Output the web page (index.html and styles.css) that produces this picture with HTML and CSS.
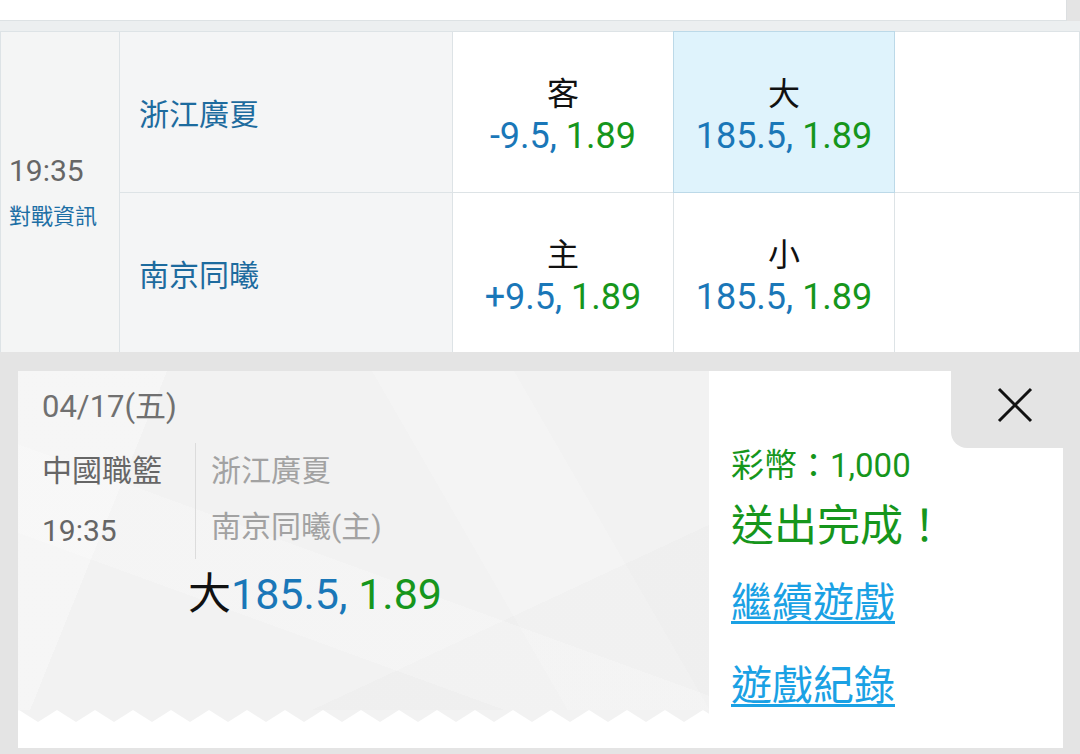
FILE: index.html
```html
<!DOCTYPE html>
<html lang="zh-Hant">
<head>
    <meta charset="UTF-8">
    <meta name="viewport" content="width=device-width, initial-scale=1.0">
    <title>投注完成</title>
    <link rel="stylesheet" href="styles.css">
</head>
<body>
    <div class="topbar"></div>
    <div class="band"></div>

    <div class="odds-table">
        <div class="cell time-cell">
            <div class="time">19:35</div>
            <a class="info" href="#">對戰資訊</a>
        </div>

        <div class="cell team">浙江廣夏</div>
        <div class="cell bet">
            <div class="label">客</div>
            <div class="odds"><span class="line">-9.5,</span> <span class="price">1.89</span></div>
        </div>
        <div class="cell bet selected">
            <div class="label">大</div>
            <div class="odds"><span class="line">185.5,</span> <span class="price">1.89</span></div>
        </div>
        <div class="cell empty"></div>

        <div class="cell team">南京同曦</div>
        <div class="cell bet">
            <div class="label">主</div>
            <div class="odds"><span class="line">+9.5,</span> <span class="price">1.89</span></div>
        </div>
        <div class="cell bet">
            <div class="label">小</div>
            <div class="odds"><span class="line">185.5,</span> <span class="price">1.89</span></div>
        </div>
        <div class="cell empty"></div>
    </div>

    <div class="result-area">
        <div class="ticket">
            <div class="ticket-info">
                <div class="info-body">
                    <div class="date">04/17(五)</div>
                    <div class="match">
                        <div class="league">
                            <div>中國職籃</div>
                            <div class="kickoff">19:35</div>
                        </div>
                        <div class="teams">
                            <div>浙江廣夏</div>
                            <div>南京同曦(主)</div>
                        </div>
                    </div>
                    <div class="pick">大<span class="line">185.5,</span> <span class="price">1.89</span></div>
                </div>
                <!-- torn ticket edge -->
                <svg class="zigzag" width="691" height="12">
                    <defs>
                        <pattern id="zz" x="1" y="0" width="38" height="12" patternUnits="userSpaceOnUse">
                            <polygon points="0,0 38,0 19,12" fill="#f2f2f2"/>
                        </pattern>
                    </defs>
                    <rect width="691" height="12" fill="url(#zz)"/>
                </svg>
                <div class="tear"></div>
            </div>

            <div class="ticket-status">
                <button class="close" aria-label="關閉">
                    <svg width="36" height="36" viewBox="0 0 36 36">
                        <path d="M2 2 L34 34 M34 2 L2 34" stroke="#111" stroke-width="3" fill="none"/>
                    </svg>
                </button>
                <div class="coins">彩幣：1,000</div>
                <div class="done">送出完成！</div>
                <a class="link" href="#">繼續遊戲</a>
                <a class="link" href="#">遊戲紀錄</a>
            </div>
        </div>
    </div>
</body>
</html>
```

FILE: styles.css
```css
body {
    margin: 0;
    font-family: Roboto, "Noto Sans CJK TC", sans-serif;
    background-color: #e4e4e4;
    width: 1080px;
    height: 754px;
    overflow: hidden;
}

.topbar {
    height: 20px;
    width: 1066px;
    background-color: #fff;
    border-right: 1px solid #dcdfe1;
    border-bottom: 1px solid #dde2e4;
}

.band {
    height: 10px;
    background-color: #eceff0;
}

.odds-table {
    display: grid;
    grid-template-columns: 118px 332px 220px 220px 1fr;
    grid-template-rows: 160px 159px;
    gap: 1px;
    background-color: #dde3e6;
    border: 1px solid #dde3e6;
    border-bottom: none;
}

.cell {
    background-color: #fff;
}

.time-cell {
    grid-row: span 2;
    background-color: #f4f5f5;
    display: flex;
    flex-direction: column;
    justify-content: center;
    padding-left: 8px;
}

.time {
    font-size: 30px;
    line-height: 40px;
    color: #666;
}

.info {
    font-size: 22px;
    line-height: 32px;
    margin-top: 10px;
    color: #1d6fa5;
    text-decoration: none;
}

.team {
    background-color: #f4f5f6;
    display: flex;
    align-items: center;
    padding-left: 19px;
    font-size: 30px;
    color: #1d6b9e;
}

.bet {
    display: flex;
    flex-direction: column;
    justify-content: center;
    align-items: center;
    padding-top: 8px;
    box-sizing: border-box;
}

.bet .label {
    font-size: 32px;
    line-height: 40px;
    color: #111;
}

.bet .odds {
    font-size: 36px;
    line-height: 44px;
}

.line {
    color: #1a77b8;
}

.price {
    color: #16961c;
}

.selected {
    background-color: #dff3fc;
    box-shadow: 0 0 0 1px #bcd9e8;
}

.result-area {
    padding: 19px 17px 6px 18px;
}

.ticket {
    display: flex;
    height: 377px;
    background-color: #fff;
}

.ticket-info {
    width: 691px;
    display: flex;
    flex-direction: column;
}

.info-body {
    flex: 1;
    padding: 16px 0 0 24px;
    background-color: #f2f2f2;
    background-image:
        linear-gradient(112deg, rgba(255,255,255,0.3) 0 18%, transparent 18%),
        linear-gradient(200deg, transparent 0 55%, rgba(255,255,255,0.2) 55% 70%, transparent 70%),
        linear-gradient(335deg, rgba(0,0,0,0.012) 0 28%, transparent 28%),
        linear-gradient(60deg, transparent 0 62%, rgba(255,255,255,0.18) 62% 78%, transparent 78%);
}

.zigzag {
    display: block;
}

.tear {
    height: 26px;
}

.date {
    font-size: 31px;
    line-height: 40px;
    color: #707070;
}

.match {
    display: flex;
    margin-top: 16px;
    font-size: 30px;
    line-height: 56px;
}

.league {
    width: 153px;
    color: #666;
}

.kickoff {
    padding-top: 4px;
}

.teams {
    border-left: 1px solid #dcdcdc;
    padding-left: 15px;
    color: #a2a2a2;
}

.pick {
    margin-top: 10px;
    padding-left: 146px;
    font-size: 43px;
    line-height: 50px;
    color: #111;
}

.ticket-status {
    flex: 1;
    display: flex;
    flex-direction: column;
    align-items: flex-start;
    padding-left: 22px;
}

.close {
    align-self: flex-end;
    width: 112px;
    height: 77px;
    padding: 16px 30px 25px 46px;
    border: none;
    background-color: #e4e4e4;
    border-bottom-left-radius: 16px;
    cursor: pointer;
}

.close svg {
    display: block;
}

.coins {
    font-size: 33px;
    line-height: 36px;
    color: #16961c;
}

.done {
    margin-top: 16px;
    font-size: 43px;
    line-height: 52px;
    color: #16961c;
}

.link {
    margin-top: 26px;
    font-size: 41px;
    line-height: 50px;
    color: #1aa1e4;
    text-decoration: underline;
    text-decoration-thickness: 3px;
    text-underline-offset: 4px;
}

.link + .link {
    margin-top: 33px;
}
```
